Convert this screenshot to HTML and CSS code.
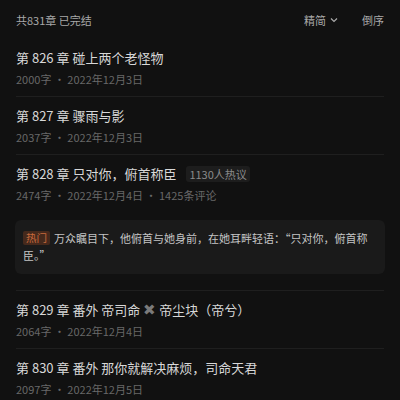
FILE: index.html
```html
<!DOCTYPE html>
<html lang="zh-CN">
<head>
    <meta charset="UTF-8">
    <meta name="viewport" content="width=device-width, initial-scale=1.0">
    <title>目录</title>
    <link rel="stylesheet" href="styles.css">
</head>
<body>

<div class="catalog">
    <div class="catalog-head">
        <span class="count">共831章 已完结</span>
        <span class="tools">
            <span class="tool">精简
                <svg class="chevron" width="8" height="6" viewBox="0 0 8 6"><path d="M1 1.5 L4 4.5 L7 1.5" fill="none" stroke="#aaa" stroke-width="1.2"/></svg>
            </span>
            <span class="tool">倒序</span>
        </span>
    </div>

    <div class="chapter">
        <div class="title">第 826 章 碰上两个老怪物</div>
        <div class="meta">2000字 · 2022年12月3日</div>
    </div>

    <div class="chapter">
        <div class="title">第 827 章 骤雨与影</div>
        <div class="meta">2037字 · 2022年12月3日</div>
    </div>

    <div class="chapter">
        <div class="title">第 828 章 只对你，俯首称臣<span class="hot-count">1130人热议</span></div>
        <div class="meta">2474字 · 2022年12月4日 · 1425条评论</div>
        <div class="comment">
            <span class="tag">热门</span>万众瞩目下，他俯首与她身前，在她耳畔轻语：“只对你，俯首称臣。”
        </div>
    </div>

    <div class="chapter">
        <div class="title">第 829 章 番外 帝司命 <span class="cross">✖</span> 帝尘块（帝兮）</div>
        <div class="meta">2064字 · 2022年12月4日</div>
    </div>

    <div class="chapter">
        <div class="title">第 830 章 番外 那你就解决麻烦，司命天君</div>
        <div class="meta">2097字 · 2022年12月5日</div>
    </div>
</div>

</body>
</html>
```

FILE: styles.css
```css
body {
    margin: 0;
    background: #111111;
    font-family: "Noto Sans CJK SC", "Noto Sans", sans-serif;
    color: #d6d6d6;
    overflow: hidden;
}
.catalog {
    padding: 0 16px;
}
.catalog-head {
    display: flex;
    justify-content: space-between;
    align-items: center;
    height: 39px;
    font-size: 11px;
    color: #a8a8a8;
}
.tools {
    display: flex;
    gap: 24px;
}
.tool {
    display: flex;
    align-items: center;
    gap: 4px;
}
.chapter {
    padding: 8px 0 8px;
    border-bottom: 1px solid #1f1f1f;
}
.title {
    font-size: 13px;
    line-height: 22px;
    color: #d8d8d8;
    white-space: nowrap;
}
.meta {
    margin-top: 1px;
    font-size: 11px;
    line-height: 18px;
    color: #686868;
}
.hot-count {
    display: inline-block;
    vertical-align: top;
    margin: 3px 0 0 10px;
    padding: 0 3px;
    height: 16px;
    line-height: 16px;
    font-size: 11px;
    color: #8a8a8a;
    background: #1d1d1d;
    border-radius: 3px;
}
.cross {
    color: #7a7a7a;
    font-size: 15px;
    line-height: 1;
}
.comment {
    margin: 16px -1px 8px;
    padding: 10px 9px 10px 8px;
    background: #1a1a1a;
    border-radius: 6px;
    font-size: 11px;
    line-height: 17px;
    color: #c4c4c4;
}
.tag {
    display: inline-block;
    vertical-align: top;
    margin: 1px 4px 0 0;
    padding: 0 3px;
    height: 14px;
    line-height: 14px;
    font-size: 10.5px;
    color: #c86a3c;
    background: #45291c;
    border-radius: 2px;
}
```
